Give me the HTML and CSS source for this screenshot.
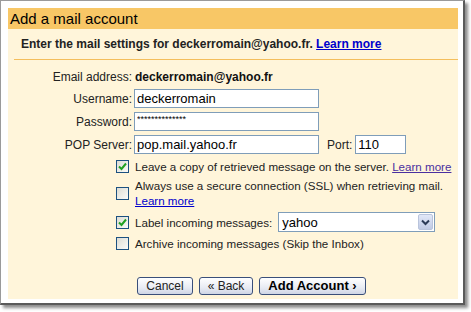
FILE: index.html
```html
<!DOCTYPE html>
<html lang="en">
<head>
  <meta charset="UTF-8" />
  <title>Add a mail account</title>
  <link rel="stylesheet" href="styles.css">
</head>
<body>
  <!-- Popup window frame -->
  <div class="window">
    <div class="panel">
      <div class="title">Add a mail account</div>

      <div class="intro">
        Enter the mail settings for deckerromain@yahoo.fr. <a href="#">Learn more</a>
      </div>

      <!-- Account fields -->
      <div class="fields">
        <div class="label">Email address:</div>
        <div class="value">deckerromain@yahoo.fr</div>

        <div class="label">Username:</div>
        <div><input class="text" type="text" value="deckerromain"></div>

        <div class="label">Password:</div>
        <div><input class="text pass" type="text" value="**************"></div>

        <div class="label">POP Server:</div>
        <div class="server">
          <input class="text" type="text" value="pop.mail.yahoo.fr">
          <span class="port-label">Port:</span>
          <input class="text port" type="text" value="110">
        </div>
      </div>

      <!-- Options -->
      <div class="options">
        <div class="option">
          <span class="box"><svg width="9" height="9" viewBox="0 0 9 9"><path d="M1 4.5 L3.5 7 L8 1.5" fill="none" stroke="#21a121" stroke-width="2"/></svg></span>
          <span class="nowrap">Leave a copy of retrieved message on the server. <a class="visited" href="#">Learn more</a></span>
        </div>
        <div class="option">
          <span class="box"></span>
          <span class="nowrap">Always use a secure connection (SSL) when retrieving mail.<br><a href="#">Learn more</a></span>
        </div>
        <div class="option">
          <span class="box"><svg width="9" height="9" viewBox="0 0 9 9"><path d="M1 4.5 L3.5 7 L8 1.5" fill="none" stroke="#21a121" stroke-width="2"/></svg></span>
          <span>Label incoming messages:</span>
          <div class="select">
            <span class="select-text">yahoo</span>
            <span class="select-btn"><svg width="9" height="7" viewBox="0 0 9 7"><path d="M1 1.5 L4.5 5 L8 1.5" fill="none" stroke="#2b3a57" stroke-width="2"/></svg></span>
          </div>
        </div>
        <div class="option">
          <span class="box"></span>
          <span>Archive incoming messages (Skip the Inbox)</span>
        </div>
      </div>

      <!-- Actions -->
      <div class="actions">
        <button class="btn cancel">Cancel</button>
        <button class="btn back">&laquo; Back</button>
        <button class="btn primary">Add Account &rsaquo;</button>
      </div>
    </div>
  </div>
</body>
</html>
```

FILE: styles.css
```css
/* Reset & base */
* {
  margin: 0;
  padding: 0;
  box-sizing: border-box;
}
html, body {
  width: 100%;
  height: 100%;
  overflow: hidden;
  background: #fff;
  font-family: "Liberation Sans", Arial, sans-serif;
  font-size: 12px;
  color: #111;
}
a {
  color: #0000cc;
}
a.visited {
  color: #4a2fa0;
}

/* Window frame */
.window {
  width: 465px;
  height: 305px;
  background: #fff;
  border: 1px solid #9a9a9a;
  border-right: 2px solid #5a5a5a;
  border-bottom: 2px solid #5a5a5a;
  box-shadow: 3px 3px 3px rgba(0,0,0,0.45);
  padding: 7px 5px 4px 7px;
}
.panel {
  width: 450px;
  height: 291px;
  background: #fff5da;
  display: flex;
  flex-direction: column;
}

/* Title bar */
.title {
  height: 21px;
  background: #f8c766;
  font-size: 15px;
  line-height: 21px;
  padding-left: 2px;
  color: #000;
}

/* Intro line */
.intro {
  margin-left: 6px;
  padding: 7px 0 7px 7px;
  line-height: 16px;
  font-weight: bold;
  color: #222;
  border-bottom: 1px solid #f4be5c;
}

/* Account fields */
.fields {
  display: grid;
  grid-template-columns: 124px auto;
  column-gap: 2px;
  row-gap: 4px;
  margin-top: 9px;
  align-items: center;
}
.label {
  text-align: right;
  color: #222;
  line-height: 16px;
}
.value {
  font-weight: bold;
  line-height: 16px;
  margin-left: 1px;
}
.text {
  width: 185px;
  height: 19px;
  border: 1px solid #7f9db9;
  background: #fff;
  font-family: "Liberation Sans", Arial, sans-serif;
  font-size: 13px;
  padding: 0 2px;
  color: #000;
  vertical-align: middle;
}
.pass {
  font-size: 9px;
  line-height: 9px;
  padding-bottom: 6px;
}
.server {
  display: flex;
  align-items: center;
}
.port-label {
  margin-left: 8px;
  margin-right: 3px;
  color: #222;
}
.text.port {
  width: 51px;
}

/* Options */
.options {
  display: flex;
  flex-direction: column;
  gap: 4px;
  margin-top: 5px;
  padding-left: 108px;
  font-size: 11.6px;
}
.option {
  display: flex;
  align-items: center;
  gap: 6px;
  line-height: 15px;
  color: #222;
}
.nowrap {
  white-space: nowrap;
}
.box {
  width: 13px;
  height: 13px;
  flex: none;
  border: 1px solid #1c5180;
  background: linear-gradient(135deg, #dcdcd4, #fbfbf8);
  display: flex;
  align-items: center;
  justify-content: center;
}
.select {
  width: 157px;
  height: 20px;
  border: 1px solid #7f9db9;
  background: #fff;
  display: flex;
  align-items: center;
  justify-content: space-between;
  padding: 1px;
}
.select-text {
  font-size: 13px;
  padding-left: 2px;
  color: #000;
}
.select-btn {
  width: 15px;
  height: 16px;
  border: 1px solid #b9c4dc;
  border-radius: 2px;
  background: linear-gradient(#e2e8f8, #c0cae4);
  display: flex;
  align-items: center;
  justify-content: center;
}

/* Action buttons */
.actions {
  display: flex;
  gap: 6px;
  margin-top: 26px;
  padding-left: 129px;
}
.btn {
  height: 18px;
  padding: 0 6px;
  border: 1px solid #3a4f7a;
  border-radius: 3px;
  background: linear-gradient(#ffffff, #e8ebf3 60%, #cfd6e6);
  font-family: "Liberation Sans", Arial, sans-serif;
  font-size: 12px;
  color: #222;
  line-height: 16px;
}
.cancel {
  width: 56px;
}
.back {
  width: 54px;
}
.primary {
  width: 107px;
  font-weight: bold;
  font-size: 13px;
  color: #000;
}
```
